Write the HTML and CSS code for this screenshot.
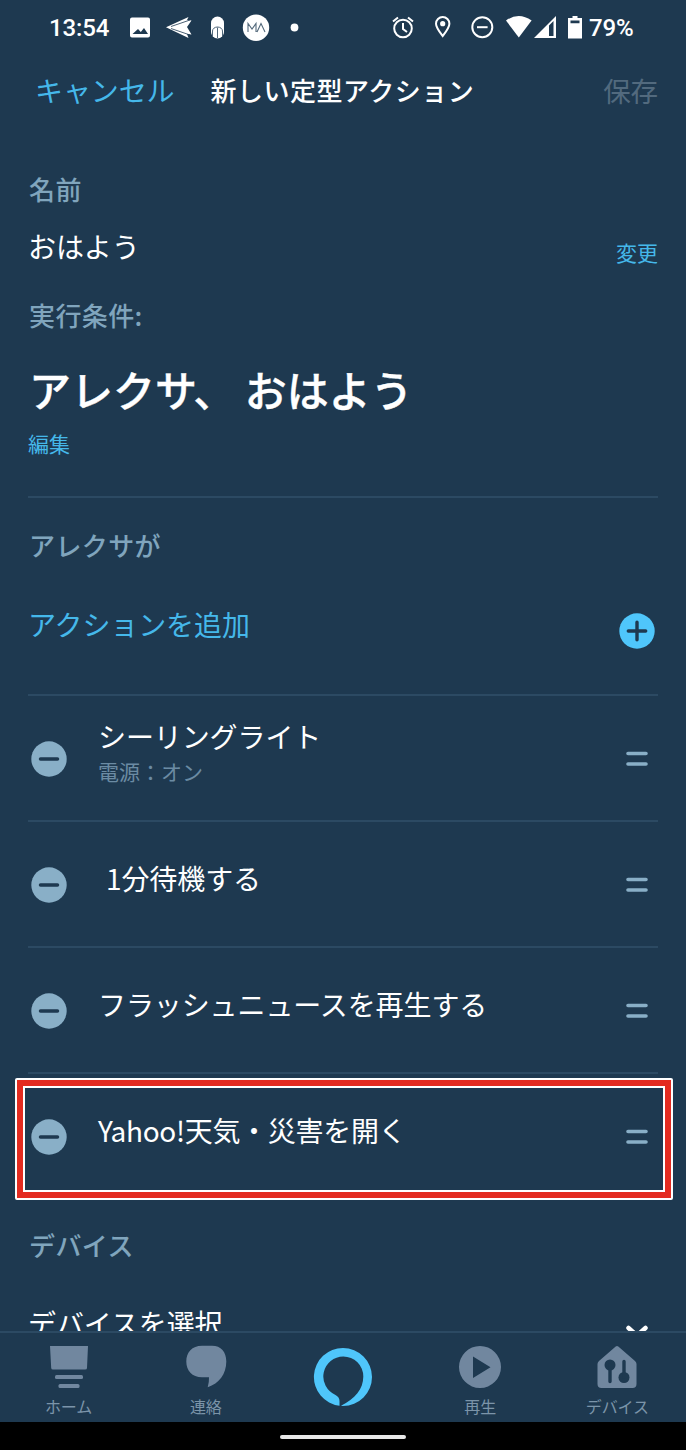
FILE: index.html
```html
<!DOCTYPE html>
<html lang="ja">
<head>
<meta charset="utf-8">
<title>新しい定型アクション</title>
<link rel="stylesheet" href="styles.css">
</head>
<body>
<div class="screen">
  <div class="status">
    <span class="time">13:54</span>
    <svg class="status-left" width="178" height="32" viewBox="126 12 178 32">
      <path fill="#fff" fill-rule="evenodd" d="M132 17.500h16q2 0 2 2v16q0 2-2 2h-16q-2 0-2-2v-16q0-2 2-2ZM132.500 34h15.500l-4-6-3.200 4-2.800-3Z"/>
      <path fill="#fff" d="M166 27.300 188.500 17l-1.500 3 4.500.5-4.500 6.500 4.500 7.500-4.500-.5 1.500 4Z"/>
      <path stroke="#1e3950" stroke-width=".8" fill="none" d="M171 26.500 190 20M171 28.500l19 6.500"/>
      <rect x="211" y="16.500" width="13" height="22" rx="6.500" fill="#fff"/>
      <path stroke="#50677a" stroke-width="1" fill="none" d="M212.500 36v-5a5 4 0 0 1 10 0v5M217.500 27.500V38"/>
      <circle cx="256" cy="27.700" r="13.200" fill="#fff"/>
      <path stroke="#53697b" stroke-width="1.100" fill="none" d="M248 32v-8.500l4 5.500 4-5.500V32M257 32l4-8.500 4 8.500"/>
      <circle cx="294.500" cy="27.500" r="3.900" fill="#fff"/>
    </svg>
    <svg class="status-right" width="196" height="32" viewBox="390 12 196 32">
      <g fill="none" stroke="#fff" stroke-width="2">
        <circle cx="403" cy="28.500" r="8.800"/><path d="M403 23v6l4 3M393 21.500l5-4M413 21.500l-5-4"/>
        <path d="M442.700 36c-3-4-6.700-8.500-6.700-12.300a6.700 6.700 0 0 1 13.400 0c0 3.800-3.700 8.300-6.700 12.300Z"/>
        <circle cx="482.300" cy="27.200" r="10"/><path d="M477 27.200h10.600"/>
      </g>
      <circle cx="442.700" cy="23.700" r="2.600" fill="#fff"/>
      <path fill="#fff" d="M506 20.500q12.700-9 25.600 0L518.800 37.500Z"/>
      <path fill="#fff" fill-rule="evenodd" d="M534 38 556 16v22ZM549 25.500v10.500h4.500V21Z"/>
      <path fill="#fff" fill-rule="evenodd" d="M572.500 16h5v2h4.500v20.500h-14V18h4.500ZM570.500 20.500v2.800h9v-2.800Z"/>
    </svg>
    <span class="battery">79%</span>
  </div>

  <header class="header">
    <a class="cancel">キャンセル</a>
    <h1 class="title">新しい定型アクション</h1>
    <span class="save">保存</span>
  </header>

  <main class="content">
    <h2 class="label">名前</h2>
    <div class="name-row"><span>おはよう</span><a class="link change">変更</a></div>
    <h2 class="label when">実行条件:</h2>
    <p class="phrase">アレクサ、 おはよう</p>
    <a class="link edit">編集</a>
    <h2 class="label will">アレクサが</h2>
    <div class="add-row">
      <span>アクションを追加</span>
      <svg width="36" height="36" viewBox="0 0 36 36"><circle cx="18" cy="18" r="17.700" fill="#4fc6fb"/><path d="M9.300 18h17.400M18 9.300v17.400" stroke="#1e3950" stroke-width="3.400" stroke-linecap="round"/></svg>
    </div>

    <ul class="actions">
      <li class="action detailed">
        <svg class="minus" viewBox="0 0 36 36"><circle cx="18" cy="18" r="17.700"/><path d="M9.500 18h17"/></svg>
        <div class="text">シーリングライト<small>電源：オン</small></div>
        <svg class="grip" viewBox="0 0 22 16"><path d="M2 2.500h18M2 13h18"/></svg>
      </li>
      <li class="action wait">
        <svg class="minus" viewBox="0 0 36 36"><circle cx="18" cy="18" r="17.700"/><path d="M9.500 18h17"/></svg>
        <div class="text">1分待機する</div>
        <svg class="grip" viewBox="0 0 22 16"><path d="M2 2.500h18M2 13h18"/></svg>
      </li>
      <li class="action">
        <svg class="minus" viewBox="0 0 36 36"><circle cx="18" cy="18" r="17.700"/><path d="M9.500 18h17"/></svg>
        <div class="text">フラッシュニュースを再生する</div>
        <svg class="grip" viewBox="0 0 22 16"><path d="M2 2.500h18M2 13h18"/></svg>
      </li>
      <li class="action highlighted">
        <svg class="minus" viewBox="0 0 36 36"><circle cx="18" cy="18" r="17.700"/><path d="M9.500 18h17"/></svg>
        <div class="text">Yahoo!天気・災害を開く</div>
        <svg class="grip" viewBox="0 0 22 16"><path d="M2 2.500h18M2 13h18"/></svg>
      </li>
    </ul>

    <h2 class="label device">デバイス</h2>
    <div class="select-row">
      <span>デバイスを選択</span>
      <svg width="24" height="16" viewBox="0 0 24 16"><path d="M3.500 3l8.500 7.500L20.500 3" fill="none" stroke="#fff" stroke-width="4.500" stroke-linecap="round"/></svg>
    </div>
  </main>

  <nav class="tabs">
    <a class="tab">
      <svg width="44" height="44" viewBox="0 0 44 44"><path d="M3 1h38l-1 22q0 1.500-2 1.500H6Q4.300 24.500 4.200 23Z"/><rect x="8" y="30" width="28" height="4" rx="1.500"/><rect x="11.500" y="39" width="21" height="4" rx="1.500"/></svg>
      <span>ホーム</span>
    </a>
    <a class="tab">
      <svg width="44" height="44" viewBox="0 0 44 44"><path d="M18 .8H28C37 .8 42.300 7 42.300 16.500C42.300 29 35 38.500 23.700 42.300Q25.200 37 25 32.300H18C8 32.300 2.300 25.500 2.300 16.500S8 .8 18 .8Z"/></svg>
      <span>連絡</span>
    </a>
    <a class="tab home">
      <svg width="60" height="60" viewBox="0 0 60 60"><path fill="#4fc6fb" d="M26.500 58.800A29 29 0 0 1 30 1A29 29 0 0 1 30 59L28 58.800C42 52 50.300 42 50.300 29.500A20 20 0 0 0 30.300 9.500A20 20 0 0 0 22.500 47.900Q26.500 50 26.500 54Z"/></svg>
    </a>
    <a class="tab">
      <svg width="44" height="44" viewBox="0 0 44 44"><path fill-rule="evenodd" d="M22 1a21 21 0 1 1 0 42a21 21 0 1 1 0-42ZM15 11.500v21.500L32.500 22.200Z"/></svg>
      <span>再生</span>
    </a>
    <a class="tab">
      <svg width="44" height="44" viewBox="0 0 44 44"><path d="M20.700 1.500q1.300-1 2.600 0L40 16q1.500 1.300 1.500 3v20q0 4-4 4h-31q-4 0-4-4V19q0-1.700 1.500-3Z"/><g fill="#1e3950"><circle cx="15" cy="20" r="5.500"/><circle cx="29" cy="32.500" r="5.500"/></g><path d="M15 20v16.500M29 32V16.500" stroke="#1e3950" stroke-width="3.400" stroke-linecap="round"/></svg>
      <span>デバイス</span>
    </a>
  </nav>
  <div class="gesture"><span></span></div>
</div>
</body>
</html>
```

FILE: styles.css
```css
* { box-sizing: border-box; }
body { margin: 0; background: #1e3950; }
h1, h2, p, ul { margin: 0; padding: 0; }
.screen {
  width: 686px;
  height: 1450px;
  display: flex;
  flex-direction: column;
  background: #1e3950;
  color: #fff;
  font: 28px/36px "Noto Sans CJK JP", sans-serif;
  letter-spacing: -.1px;
}
.status {
  height: 56px;
  display: flex;
  align-items: center;
  padding-left: 49px;
  font: 500 24px/32px Roboto, sans-serif;
}
.time { width: 77px; }
.status-right { margin-left: 86px; }
.battery { margin-left: 3px; }
.header {
  height: 70px;
  display: flex;
  align-items: center;
  padding: 0 28px 3px 35px;
}
.cancel, .link, .add-row { color: #45b8ea; }
.title { margin-left: 36px; font-size: 26px; font-weight: 500; letter-spacing: .5px; }
.save { margin-left: auto; font-size: 27.500px; color: #526a7e; }
.content {
  height: 1205px;
  padding: 45px 28px 0;
  overflow: hidden;
}
.label {
  height: 36px;
  padding-left: 1px;
  font-size: 26px;
  font-weight: 500;
  letter-spacing: .4px;
  color: #80a5bd;
}
.name-row {
  display: flex;
  justify-content: space-between;
  height: 36px;
  margin-top: 21px;
}
.link { font-size: 21px; line-height: 30px; letter-spacing: 0; }
.change { padding-top: 9px; }
.when { margin-top: 33px; }
.phrase {
  margin-top: 26px;
  padding-left: 1px;
  font-size: 42px;
  font-weight: 500;
  line-height: 60px;
  letter-spacing: 0;
  -webkit-text-stroke: .4px #fff;
}
.edit { display: block; height: 70px; padding-top: 9px; margin-bottom: 7px; }
.will { height: 67px; padding-top: 29px; border-top: 2px solid #2c4a63; }
.add-row {
  display: flex;
  justify-content: space-between;
  height: 88px;
  margin-top: 43px;
}
.add-row svg { margin: 7px 3px 0 0; }
.actions { list-style: none; }
.action {
  position: relative;
  height: 126px;
  display: flex;
  align-items: center;
  padding: 2px 10px 0 3px;
  border-top: 2px solid #2c4a63;
}
.minus { width: 36px; height: 36px; }
.minus circle { fill: #89afc7; }
.minus path { stroke: #1e3950; stroke-width: 3.500; stroke-linecap: round; }
.text { margin-left: 31px; padding-bottom: 15px; }
.wait .text { margin-left: 39px; }
.detailed .text { padding-bottom: 12px; }
.text small { display: block; font-size: 21px; line-height: 34px; letter-spacing: 0; color: #6b8ba3; }
.highlighted .text { letter-spacing: -.300px; }
.grip {
  width: 22px;
  height: 16px;
  margin-left: auto;
}
.grip path { stroke: #89afc7; stroke-width: 3.600; stroke-linecap: round; }
.highlighted::after {
  content: "";
  position: absolute;
  inset: 4px -15px -2px -13px;
  border: 2px solid #fff;
  border-radius: 2px;
  box-shadow: inset 0 0 0 6px #e42b20, inset 0 0 0 8px #fff;
}
.device { margin-top: 29px; }
.select-row {
  display: flex;
  justify-content: space-between;
  margin-top: 42px;
  padding-right: 9px;
}
.select-row svg { margin-top: 20px; }
.tabs {
  height: 91px;
  display: flex;
  justify-content: space-around;
  border-top: 2px solid #2c4a63;
}
.tab {
  width: 137px;
  display: flex;
  flex-direction: column;
  align-items: center;
  padding-top: 12px;
  font-size: 16px;
  line-height: 24px;
  color: #7b94a9;
}
.home { padding-top: 14px; }
.tab svg { fill: #71879f; }
.tab span { margin-top: 5px; }
.gesture {
  height: 28px;
  display: flex;
  justify-content: center;
  padding-top: 13px;
  background: #000;
}
.gesture span { width: 126px; height: 4px; border-radius: 2px; background: #e8e8e8; }
```
